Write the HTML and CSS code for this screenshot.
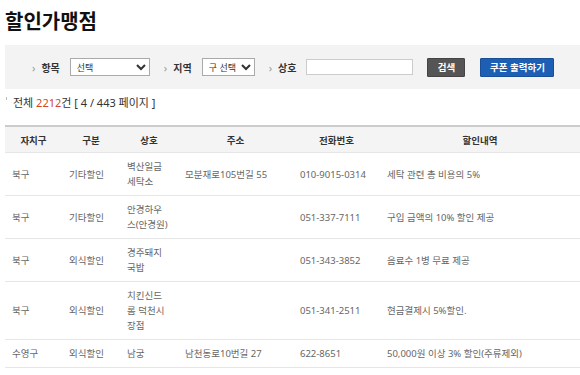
FILE: index.html
```html
<!DOCTYPE html>
<html lang="ko">
<head>
<meta charset="utf-8">
<title>할인가맹점</title>
<link rel="stylesheet" href="styles.css">
</head>
<body>
<h1 class="title">할인가맹점</h1>
<div class="search">
  <div class="field">
    <span class="arrow">›</span>
    <label class="label">항목</label>
    <select class="sel sel-item"><option>선택</option></select>
  </div>
  <div class="field">
    <span class="arrow">›</span>
    <label class="label">지역</label>
    <select class="sel sel-area"><option>구 선택</option></select>
  </div>
  <div class="field">
    <span class="arrow">›</span>
    <label class="label">상호</label>
    <input class="text" type="text">
  </div>
  <button class="btn btn-search">검색</button>
  <button class="btn btn-coupon">쿠폰 출력하기</button>
</div>
<p class="total"><span class="tick"></span>전체 <span class="count">2212</span>건 [ 4 / 443 페이지 ]</p>
<table class="list">
  <colgroup>
    <col class="c1"><col class="c2"><col class="c3"><col class="c4"><col class="c5"><col class="c6">
  </colgroup>
  <thead>
    <tr><th>자치구</th><th>구분</th><th>상호</th><th>주소</th><th>전화번호</th><th>할인내역</th></tr>
  </thead>
  <tbody>
    <tr><td>북구</td><td>기타할인</td><td class="name">벽산일금세탁소</td><td>모분재로105번길 55</td><td>010-9015-0314</td><td>세탁 관련 총 비용의 5%</td></tr>
    <tr><td>북구</td><td>기타할인</td><td class="name">안경하우스(안경원)</td><td></td><td>051-337-7111</td><td>구입 금액의 10% 할인 제공</td></tr>
    <tr><td>북구</td><td>외식할인</td><td class="name">경주돼지국밥</td><td></td><td>051-343-3852</td><td>음료수 1병 무료 제공</td></tr>
    <tr><td>북구</td><td>외식할인</td><td class="name">치킨신드롬 덕천시장점</td><td></td><td>051-341-2511</td><td>현금결제시 5%할인.</td></tr>
    <tr><td>수영구</td><td>외식할인</td><td class="name">남궁</td><td>남천동로10번길 27</td><td>622-8651</td><td>50,000원 이상 3% 할인(주류제외)</td></tr>
  </tbody>
</table>
</body>
</html>
```
FILE: styles.css
```css
html, body {
  margin: 0;
  padding: 0;
  background: #fff;
  font-family: "Noto Sans", "Noto Sans CJK KR", sans-serif;
  color: #333;
}
.title {
  margin: 0;
  padding: 7px 5px 10px;
  font-family: "Noto Sans CJK KR", sans-serif;
  font-size: 20px;
  line-height: 28px;
  font-weight: 700;
  color: #111;
}
.search {
  margin-left: 5px;
  height: 44px;
  background: #f3f3f3;
  display: flex;
  align-items: center;
  padding-left: 27px;
}
.field {
  display: flex;
  align-items: center;
  margin-right: 14px;
}
.arrow {
  font-size: 11px;
  color: #999;
  margin-right: 6px;
  line-height: 1;
}
.label {
  font-family: "Noto Sans CJK KR", sans-serif;
  font-size: 10px;
  font-weight: 700;
  color: #333;
  margin-right: 10px;
}
.sel {
  height: 18px;
  font-family: "Noto Sans CJK KR", sans-serif;
  font-size: 9px;
  color: #333;
  border: 1px solid #aaa;
  background: #fff;
  padding: 0 2px;
  border-radius: 0;
}
.sel-item { width: 80px; }
.sel-area { width: 53px; }
.text {
  width: 107px;
  height: 16px;
  box-sizing: border-box;
  border: 1px solid #ccc;
  background: #fff;
  margin: 0;
}
.btn {
  height: 19px;
  padding: 0;
  font-family: "Noto Sans CJK KR", sans-serif;
  font-size: 9.5px;
  font-weight: 700;
  color: #fff;
  border-radius: 1px;
}
.btn-search {
  width: 38px;
  background: #555;
  border: 1px solid #444;
  margin-left: 0;
  margin-right: 15px;
}
.btn-coupon {
  width: 74px;
  background: #1d5fb5;
  border: 1px solid #1a4f98;
}
.total {
  margin: 0;
  padding: 7px 5px 0 6px;
  height: 28px;
  box-sizing: border-box;
  font-size: 11px;
  color: #333;
  line-height: 14px;
}
.tick {
  display: inline-block;
  width: 1px;
  height: 3px;
  background: #bbb;
  margin-right: 6px;
  vertical-align: top;
  margin-top: 1px;
}
.count { color: #d2452a; }
.list {
  margin: 8px 0 0 5px;
  width: 575px;
  border-collapse: collapse;
  table-layout: fixed;
  border-top: 2px solid #ccc;
  font-size: 9.5px;
}
.c1 { width: 57px; }
.c2 { width: 58px; }
.c3 { width: 58px; }
.c4 { width: 115px; }
.c5 { width: 87px; }
.c6 { width: 200px; }
.list th {
  background: #f4f4f4;
  height: 25px;
  padding: 0;
  font-weight: 700;
  color: #333;
  text-align: center;
  border-bottom: 1px solid #e6e6e6;
}
.list td {
  padding: 6px 7px;
  line-height: 15px;
  color: #666;
  text-align: left;
  border-bottom: 1px solid #e6e6e6;
}
.list td.name { padding-right: 8px; }
```
